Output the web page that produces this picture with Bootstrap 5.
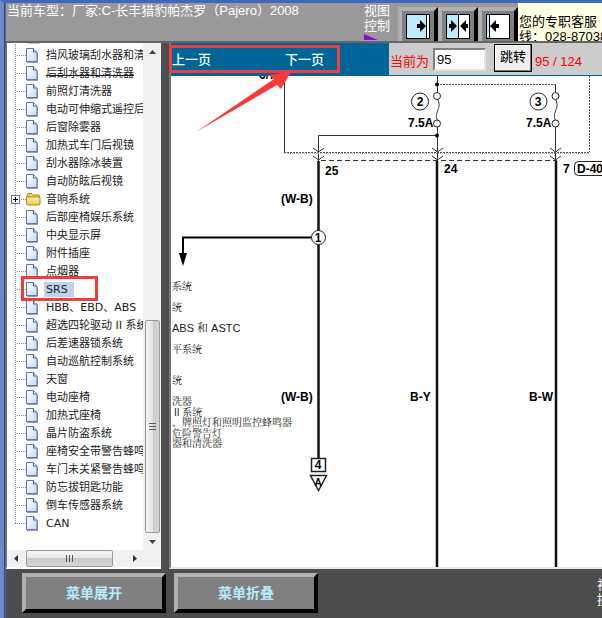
<!DOCTYPE html>
<html lang="zh-CN">
<head>
<meta charset="utf-8">
<meta name="viewport" content="width=device-width, initial-scale=1">
<title>Pajero 2008</title>
<link rel="stylesheet" href="https://cdn.jsdelivr.net/npm/bootstrap@5.3.0/dist/css/bootstrap.min.css">
<style>
body{font:13px/15px "Liberation Sans","Noto Sans CJK SC",sans-serif;background:#4d4d4d;color:#000}
.frame{border-top:3px solid #4067bd;border-left:4px solid #7189c4;box-shadow:inset 1px 0 #1f46a0,inset 2px 0 #666}
.frame>*{margin-left:2px}
.topbar{height:40px;background:#999;border-bottom:2px solid #666;padding-left:1px}
.bevel{background:#808080;border:4px solid;border-color:#b0b0b0 #000 #000 #b0b0b0;border-radius:0;padding:0}
.viewbtn{width:40px;height:40px}
.notice{background:#ffffe1;width:84px;padding:11px 0 0 1px}
.tree-pane{width:155px;background:#fff;border-left:1px solid #777;border-bottom:2px solid #fff}
.rows{margin-top:-15px;font:11px/15px "DejaVu Sans","Noto Sans CJK SC",sans-serif}
.rows li{height:18px;white-space:nowrap}
.rows svg{flex:none}
.rows a{color:#222;margin-left:6px;padding:0 2px}
.rows .folder-icon+a{margin-left:3px}
.rows a.picked{background:#c0d2ec;padding-right:6px}
.rows a.crossed{text-decoration:underline!important;text-underline-offset:-2px;text-decoration-skip-ink:none}
.branch{flex:none;width:11px;margin-left:8px;align-self:stretch;background:repeating-linear-gradient(#888 0 1px,#fff 1px 2px) left top/1px 100% no-repeat,repeating-linear-gradient(90deg,#888 0 1px,#fff 1px 2px) left center/100% 1px no-repeat}
.rows li:last-child .branch{background-size:1px 50%,100% 1px}
.expander{width:9px;height:9px;left:-4px;top:5px;background:#fff;border:1px solid #777}
.expander svg{display:block}
.vbar{width:18px;background:#f0f0f0}
.hbar{height:17px;background:#f0f0f0}
.arrowcell{width:17px;height:17px}
.thumb{border:1px solid #999;border-radius:2px}
.vthumb{width:15px;flex:0 0 42%;background:linear-gradient(90deg,#f5f5f5,#e4e4e6 50%,#c8c8cc 50%,#d6d6da)}
.hthumb{width:87px;margin-left:2px;background:linear-gradient(#f5f5f5,#e4e4e6 50%,#c8c8cc 50%,#d6d6da)}
.viewer{margin-left:8px;border-left:2px solid #777;border-bottom:2px solid #e8e8e8;background:#fff}
.pager{height:33px;background:#069;padding-bottom:1px}
.pager a{color:#fff;font-weight:500}
.pager-links{width:218px;padding:0 65px 0 1px}
.pager-form{background:#ccc;color:#f00;padding:4px 1px 0}
.pager-form input{width:53px;height:23px;margin:0 8px 4px 4px;padding:0 2px;border:2px solid;border-color:#808080 #e4e4e4 #e4e4e4 #808080;border-radius:0;font-size:13px}
.pager-form button{width:38px;height:28px;padding:0 0 4px;margin:0 3px 6px 0;background:#eee;border:1px solid #000;box-shadow:inset -1px -1px #777,inset 1px 1px #fff}
.bottom{height:49px;padding:4px 0 0 16px;color:#fff}
.bottom .bevel{width:144px;height:40px;color:#b9ebff;font-size:14px;font-weight:700}
.sidelabel{width:5px;padding-top:4px}
.ring{border:3px solid #f93a3a;pointer-events:none}
.ring-tree{left:21px;top:276px;width:77px;height:25px}
.ring-pager{left:169px;top:45px;width:171px;height:28px}
.pointer{left:190px;top:66px;pointer-events:none}
.codes{font:700 12px "Liberation Sans",sans-serif}
.notes{font:10px "Liberation Sans","Noto Serif CJK SC","Noto Sans CJK SC",serif}
</style>
<script src="https://cdn.jsdelivr.net/npm/bootstrap@5.3.0/dist/js/bootstrap.bundle.min.js"></script>
</head>
<body>
<svg width="0" height="0" class="position-absolute" aria-hidden="true">
<defs>
<linearGradient id="pg" x2="1" y2="1"><stop stop-color="#fff"/><stop offset="1" stop-color="#c5dcf8"/></linearGradient>
<linearGradient id="fg" x2="0" y2="1"><stop stop-color="#fff6b8"/><stop offset="1" stop-color="#f2c840"/></linearGradient>
<symbol id="page" viewBox="0 0 12 15"><path d="M.5.5h7l3.500 3.500v9.500H.5z" fill="url(#pg)" stroke="#5a74ba"/><path d="M7.500.5v3.500h3.500" fill="#dbe7fa" stroke="#4460aa"/><path d="M1 14.500h10.500V5" fill="none" stroke="#6b7694" stroke-opacity=".7"/></symbol>
<symbol id="folder" viewBox="0 0 15 13"><path d="M1 3.500V2l1-1.500h4L7.500 2H13l.5 1.500V11H1z" fill="#f0cc58" stroke="#a98420"/><path d="M.5 4h13.500v7l-1 1H1.500l-1-1z" fill="url(#fg)" stroke="#b18a20"/></symbol>
</defs>
</svg>

<div class="frame vh-100 d-flex flex-column overflow-hidden position-relative">
<header class="topbar d-flex overflow-hidden text-white flex-shrink-0">
  <div class="flex-grow-1 text-nowrap">当前车型：厂家:C-长丰猎豹帕杰罗（Pajero）2008</div>
  <div class="me-2 flex-shrink-0"><div>视图<br>控制</div><svg width="17" height="8" class="d-block" aria-hidden="true"><path d="M0 0L17 8H0z" fill="#b98ae0"/><path d="M0 1l14 6H0z" fill="#7a18b8"/></svg></div>
  <div class="d-flex pt-1 flex-shrink-0">
    <button class="bevel viewbtn" aria-label="展开右侧"><svg width="24" height="26"><path d="M1 1h22v23H1z" fill="#fff"/><path d="M1 1h19v23H1z" fill="#bdeaff"/><path d="M.5.500h23v24H.500zM20.500 0v25" fill="none" stroke="#000"/><path d="M11 10h3V6l6 6-6 6v-4h-3z"/></svg></button>
    <button class="bevel viewbtn" aria-label="居中"><svg width="24" height="26"><path d="M1 1h22v23H1z" fill="#fff"/><path d="M1 1h11v23H1z" fill="#bdeaff"/><path d="M.5.500h23v24H.500zM12.500 0v25" fill="none" stroke="#000"/><path d="M3 10h2V6l6 6-6 6v-4H3zM22 10h-2V6l-6 6 6 6v-4h2z"/></svg></button>
    <button class="bevel viewbtn" aria-label="展开左侧"><svg width="24" height="26"><path d="M1 1h22v23H1z" fill="#fff"/><path d="M1 1h3v23H1z" fill="#bdeaff"/><path d="M.5.500h23v24H.500zM3.500 0v25" fill="none" stroke="#000"/><path d="M13 10h-3V6l-6 6 6 6v-4h3z"/></svg></button>
  </div>
  <div class="notice text-black text-nowrap overflow-hidden flex-shrink-0">您的专职客服<br>线：028-87038</div>
</header>

<div class="d-flex flex-grow-1 overflow-hidden">
  <nav class="tree-pane d-flex flex-column flex-shrink-0" aria-label="系统目录">
    <div class="d-flex flex-grow-1 overflow-hidden">
      <div class="flex-grow-1 overflow-hidden">
      <ul class="rows list-unstyled mb-0">
        <li class="d-flex align-items-center"><span class="branch"></span><svg width="15" height="13" class="folder-icon"><use href="#folder"/></svg><a class="text-decoration-none" href="#">雨刮系统</a></li>
        <li class="d-flex align-items-center"><span class="branch"></span><svg width="12" height="15"><use href="#page"/></svg><a class="text-decoration-none" href="#">挡风玻璃刮水器和清洗器</a></li>
        <li class="d-flex align-items-center"><span class="branch"></span><svg width="12" height="15"><use href="#page"/></svg><a class="crossed" href="#">后刮水器和清洗器</a></li>
        <li class="d-flex align-items-center"><span class="branch"></span><svg width="12" height="15"><use href="#page"/></svg><a class="text-decoration-none" href="#">前照灯清洗器</a></li>
        <li class="d-flex align-items-center"><span class="branch"></span><svg width="12" height="15"><use href="#page"/></svg><a class="text-decoration-none" href="#">电动可伸缩式遥控后视镜</a></li>
        <li class="d-flex align-items-center"><span class="branch"></span><svg width="12" height="15"><use href="#page"/></svg><a class="text-decoration-none" href="#">后窗除雾器</a></li>
        <li class="d-flex align-items-center"><span class="branch"></span><svg width="12" height="15"><use href="#page"/></svg><a class="text-decoration-none" href="#">加热式车门后视镜</a></li>
        <li class="d-flex align-items-center"><span class="branch"></span><svg width="12" height="15"><use href="#page"/></svg><a class="text-decoration-none" href="#">刮水器除冰装置</a></li>
        <li class="d-flex align-items-center"><span class="branch"></span><svg width="12" height="15"><use href="#page"/></svg><a class="text-decoration-none" href="#">自动防眩后视镜</a></li>
        <li class="d-flex align-items-center"><span class="branch position-relative"><span class="expander position-absolute"><svg width="7" height="7"><path d="M1 3.500h5M3.500 1v5" stroke="#000"/></svg></span></span><svg width="15" height="13" class="folder-icon"><use href="#folder"/></svg><a class="text-decoration-none" href="#">音响系统</a></li>
        <li class="d-flex align-items-center"><span class="branch"></span><svg width="12" height="15"><use href="#page"/></svg><a class="text-decoration-none" href="#">后部座椅娱乐系统</a></li>
        <li class="d-flex align-items-center"><span class="branch"></span><svg width="12" height="15"><use href="#page"/></svg><a class="text-decoration-none" href="#">中央显示屏</a></li>
        <li class="d-flex align-items-center"><span class="branch"></span><svg width="12" height="15"><use href="#page"/></svg><a class="text-decoration-none" href="#">附件插座</a></li>
        <li class="d-flex align-items-center"><span class="branch"></span><svg width="12" height="15"><use href="#page"/></svg><a class="text-decoration-none" href="#">点烟器</a></li>
        <li class="d-flex align-items-center"><span class="branch"></span><svg width="12" height="15"><use href="#page"/></svg><a class="text-decoration-none picked" href="#" aria-current="true">SRS</a></li>
        <li class="d-flex align-items-center"><span class="branch"></span><svg width="12" height="15"><use href="#page"/></svg><a class="text-decoration-none" href="#">HBB、EBD、ABS</a></li>
        <li class="d-flex align-items-center"><span class="branch"></span><svg width="12" height="15"><use href="#page"/></svg><a class="text-decoration-none" href="#">超选四轮驱动 II 系统</a></li>
        <li class="d-flex align-items-center"><span class="branch"></span><svg width="12" height="15"><use href="#page"/></svg><a class="text-decoration-none" href="#">后差速器锁系统</a></li>
        <li class="d-flex align-items-center"><span class="branch"></span><svg width="12" height="15"><use href="#page"/></svg><a class="text-decoration-none" href="#">自动巡航控制系统</a></li>
        <li class="d-flex align-items-center"><span class="branch"></span><svg width="12" height="15"><use href="#page"/></svg><a class="text-decoration-none" href="#">天窗</a></li>
        <li class="d-flex align-items-center"><span class="branch"></span><svg width="12" height="15"><use href="#page"/></svg><a class="text-decoration-none" href="#">电动座椅</a></li>
        <li class="d-flex align-items-center"><span class="branch"></span><svg width="12" height="15"><use href="#page"/></svg><a class="text-decoration-none" href="#">加热式座椅</a></li>
        <li class="d-flex align-items-center"><span class="branch"></span><svg width="12" height="15"><use href="#page"/></svg><a class="text-decoration-none" href="#">晶片防盗系统</a></li>
        <li class="d-flex align-items-center"><span class="branch"></span><svg width="12" height="15"><use href="#page"/></svg><a class="text-decoration-none" href="#">座椅安全带警告蜂鸣器</a></li>
        <li class="d-flex align-items-center"><span class="branch"></span><svg width="12" height="15"><use href="#page"/></svg><a class="text-decoration-none" href="#">车门未关紧警告蜂鸣器</a></li>
        <li class="d-flex align-items-center"><span class="branch"></span><svg width="12" height="15"><use href="#page"/></svg><a class="text-decoration-none" href="#">防忘拔钥匙功能</a></li>
        <li class="d-flex align-items-center"><span class="branch"></span><svg width="12" height="15"><use href="#page"/></svg><a class="text-decoration-none" href="#">倒车传感器系统</a></li>
        <li class="d-flex align-items-center"><span class="branch"></span><svg width="12" height="15"><use href="#page"/></svg><a class="text-decoration-none" href="#">CAN</a></li>
      </ul>
      </div>
      <div class="vbar d-flex flex-column align-items-center flex-shrink-0" aria-hidden="true">
        <svg class="arrowcell flex-shrink-0" viewBox="0 0 17 17"><path d="M5 11l3.500-4 3.500 4z" fill="#444"/></svg>
        <div class="flex-grow-1"></div>
        <div class="thumb vthumb d-flex align-items-center justify-content-center"><svg width="7" height="8"><path d="M0 .5h7M0 3.500h7M0 6.500h7" stroke="#555"/></svg></div>
        <svg class="arrowcell flex-shrink-0" viewBox="0 0 17 17"><path d="M5 7l3.500 4 3.500-4z" fill="#444"/></svg>
      </div>
    </div>
    <div class="hbar d-flex flex-shrink-0" aria-hidden="true">
      <svg class="arrowcell flex-shrink-0" viewBox="0 0 17 17"><path d="M11 5L7 8.500l4 3.500z" fill="#333"/></svg>
      <div class="thumb hthumb d-flex align-items-center justify-content-center"><svg width="8" height="7"><path d="M.5 0v7M3.500 0v7M6.500 0v7" stroke="#555"/></svg></div>
      <div class="flex-grow-1"></div>
      <svg class="arrowcell flex-shrink-0 me-3" viewBox="0 0 17 17"><path d="M5 5l4 3.500L5 12z" fill="#333"/></svg>
    </div>
  </nav>

  <main class="viewer d-flex flex-column flex-grow-1 overflow-hidden">
    <div class="pager d-flex flex-shrink-0">
      <div class="pager-links d-flex align-items-center justify-content-between flex-shrink-0">
        <a class="text-decoration-none" href="#">上一页</a><a class="text-decoration-none" href="#">下一页</a>
      </div>
      <form class="pager-form d-flex align-items-center flex-grow-1 text-nowrap">
        <label for="pageno">当前为</label><input id="pageno" type="text" value="95"><button type="button">跳转</button><span>95 / 124</span>
      </form>
    </div>
    <svg class="flex-grow-1 w-100 d-block" role="img" aria-label="电路图">
      <g transform="translate(-171 -76)">
        <g fill="none" stroke="#333">
          <path d="M284.500 76v76M318.500 161v-25.500H437M437.500 76v16M437.500 127v34M555.500 84v8M555.500 127v34"/>
          <path d="M284 152.500h306M437 84.500h119M589.500 76v76" stroke="#555" stroke-dasharray="2 1"/>
          <path d="M284 153.500h306" stroke="#aaa" stroke-dasharray="1 1"/>
          <path d="M321 160.500h236" stroke-dasharray="5 3"/>
          <path d="M313 148l5.500 4 5.500-4M313 156l5.500 4 5.500-4M432 148l5.500 4 5.500-4M432 156l5.500 4 5.500-4M550 148l5.500 4 5.500-4M550 156l5.500 4 5.500-4"/>
          <path d="M437.500 99c3 6 1 9 0 12s-2 6 0 9M555.500 99c3 6 1 9 0 12s-2 6 0 9"/>
        </g>
        <g fill="#000"><circle cx="437" cy="84.500" r="2"/><circle cx="437" cy="135.500" r="2"/><path d="M179 253h8l-4 13z"/></g>
        <path d="M318.500 161v297M437 161v700M556 161v700" stroke="#111" stroke-width="2.500" fill="none"/>
        <path d="M312 237.500H183V256" stroke="#000" stroke-width="2" fill="none"/>
        <g fill="#fff" stroke="#222"><circle cx="437" cy="96" r="3.500"/><circle cx="437" cy="123.500" r="3.500"/><circle cx="555.500" cy="96" r="3.500"/><circle cx="555.500" cy="123.500" r="3.500"/><circle cx="420" cy="101.500" r="8.500"/><circle cx="538.500" cy="101.500" r="8.500"/><circle cx="318.500" cy="237.500" r="7"/><path d="M311.500 458.500h14v13h-14zM310.500 475.500h16l-8 15z" stroke-width="1.500"/><rect x="574.500" y="161.500" width="60" height="14" rx="4"/></g>
        <g class="codes">
          <text x="259" y="79">6/7</text>
          <text x="408" y="127">7.5A</text><text x="526" y="127">7.5A</text>
          <text x="325" y="175">25</text><text x="444" y="173">24</text><text x="563" y="173">7</text><text x="577" y="173">D-40</text>
          <text x="281" y="203">(W-B)</text><text x="281" y="401">(W-B)</text><text x="410" y="401">B-Y</text><text x="529" y="401">B-W</text>
          <g text-anchor="middle"><text x="420" y="106">2</text><text x="538" y="106">3</text><text x="318" y="242">1</text><text x="318" y="469">4</text><text x="318" y="486" font-size="10">A</text></g>
        </g>
        <g class="notes" fill="#222">
          <text x="172" y="290">系统</text><text x="172" y="311">统</text><text x="172" y="332" font-size="11">ABS 和 ASTC</text><text x="172" y="353">平系统</text><text x="172" y="384">统</text><text x="172" y="405">洗器</text><text x="174" y="416">II 系统</text><text x="172" y="426">、牌照灯和照明监控蜂鸣器</text><text x="172" y="437">危险警告灯</text><text x="172" y="447">器和清洗器</text>
        </g>
      </g>
    </svg>
  </main>
</div>

<footer class="bottom d-flex flex-shrink-0">
  <button class="bevel me-2">菜单展开</button>
  <button class="bevel">菜单折叠</button>
  <div class="sidelabel ms-auto overflow-hidden text-nowrap">视图<br>控制</div>
</footer>
</div>

<div class="ring ring-tree position-absolute"></div>
<div class="ring ring-pager position-absolute"></div>
<svg class="pointer position-absolute" width="110" height="72" aria-hidden="true"><path d="M6 66L84 13l-6-4 23-3-10 17-4-4z" fill="#f93a3a"/></svg>
</body>
</html>
